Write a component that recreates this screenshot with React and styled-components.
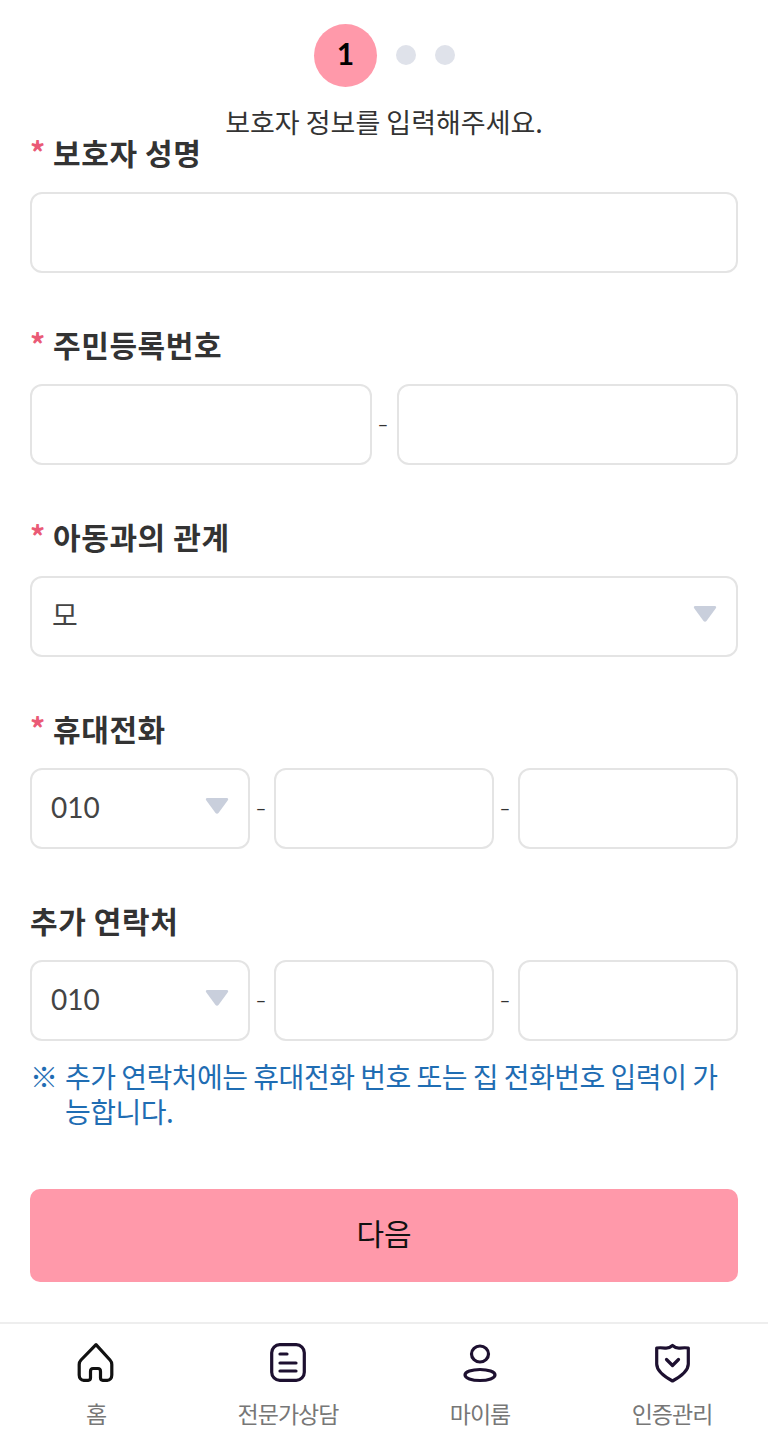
import React from 'react'
import styled, { createGlobalStyle } from 'styled-components'

const fontStack = `"Noto Sans CJK KR", "Noto Sans", sans-serif`

const GlobalStyle = createGlobalStyle`
  html, body {
    margin: 0;
    padding: 0;
    background: #fff;
    font-family: ${fontStack};
  }
  * {
    box-sizing: border-box;
  }
`

const Page = styled.div`
  width: 768px;
  height: 1440px;
  overflow: hidden;
  background: #fff;
`

const Stepper = styled.div`
  display: flex;
  align-items: center;
  justify-content: center;
  padding-top: 24px;
  padding-left: 1px;
  gap: 19px;
`

const ActiveStep = styled.div`
  width: 63px;
  height: 63px;
  padding-bottom: 5px;
  border-radius: 50%;
  background: #ff99aa;
  color: #000;
  display: flex;
  align-items: center;
  justify-content: center;
  font-family: Lato, sans-serif;
  font-size: 30px;
  font-weight: 700;
`

const StepDot = styled.div`
  width: 20px;
  height: 20px;
  margin-bottom: 1px;
  border-radius: 50%;
  background: #dfe2ea;
`

const Caption = styled.p`
  margin: 21px 0 0;
  text-align: center;
  font-size: 27px;
  line-height: 28px;
  color: #333;
`

const Form = styled.form`
  padding: 0 30px;
  display: flex;
  flex-direction: column;
  gap: 55px;
`

const Field = styled.div`
  display: flex;
  flex-direction: column;
  gap: 18px;
`

const Label = styled.label`
  display: flex;
  align-items: center;
  height: 38px;
  padding-bottom: 7px;
  font-size: 30px;
  font-weight: 700;
  letter-spacing: 0.6px;
  color: #333;
`

const Star = styled.span`
  width: 23px;
  margin-bottom: 2px;
  color: #ea5a76;
  font-size: 30px;
  font-weight: 700;
`

const Row = styled.div`
  display: grid;
  grid-template-columns: ${(p) => p.$columns};
  align-items: center;
`

const Input = styled.input`
  min-width: 0;
  width: 100%;
  height: 81px;
  padding: 0 20px;
  background: #fff;
  border: 2px solid #e4e4e4;
  border-radius: 12px;
  font-family: ${fontStack};
  font-size: 28px;
  color: #444;
  outline: none;
`

const Dash = styled.span`
  padding-bottom: 5px;
  padding-right: 2px;
  text-align: center;
  font-family: Lato, sans-serif;
  font-size: 32px;
  font-weight: 300;
  color: #333;
`

const SelectWrap = styled.div`
  position: relative;
  min-width: 0;
  height: 81px;
`

const SelectBox = styled.select`
  appearance: none;
  width: 100%;
  height: 100%;
  padding: 0 50px 4px ${(p) => p.$inset}px;
  background: #fff;
  border: 2px solid #e4e4e4;
  border-radius: 12px;
  font-family: Lato, ${fontStack};
  font-size: 28px;
  color: #444;
  outline: none;
`

const Arrow = styled.svg`
  position: absolute;
  top: 29px;
  right: 21px;
  width: 24px;
  height: 18px;
  pointer-events: none;
`

const Note = styled.div`
  display: flex;
  margin-top: -37px;
  color: #1f6db3;
  font-size: 28px;
  line-height: 35px;
  letter-spacing: -0.5px;
`

const NoteMark = styled.span`
  flex: none;
  width: 35px;
`

const NextButton = styled.button`
  display: block;
  width: 100%;
  height: 93px;
  margin-top: 5px;
  padding-bottom: 8px;
  border: 0;
  border-radius: 10px;
  background: #ff99aa;
  color: #111;
  font-family: ${fontStack};
  font-size: 30px;
`

const BottomNav = styled.nav`
  display: grid;
  grid-template-columns: repeat(4, 1fr);
  margin-top: 40px;
  height: 118px;
  padding-top: 19px;
  border-top: 2px solid #eeeeee;
  background: #fff;
`

const NavItem = styled.div`
  display: flex;
  flex-direction: column;
  align-items: center;
  gap: 9px;
  color: #777;
  font-size: 23px;
  line-height: 34px;
  letter-spacing: -1px;
`

const NavIcon = styled.svg`
  display: block;
  width: 44px;
  height: 44px;
  fill: none;
  stroke: ${(p) => p.$color};
  stroke-width: 3.2;
  stroke-linecap: round;
  stroke-linejoin: round;
`

const CaretIcon = () => (
  <Arrow viewBox="0 0 24 18">
    <path d="M2 1h20c1 0 1.500 1 1 2L13.500 16c-.8 1-2.200 1-3 0L1 3C.5 2 1 1 2 1z" fill="#c9cfdc" />
  </Arrow>
)

const PhoneRow = () => (
  <Row $columns="1fr 24px 1fr 24px 1fr">
    <SelectWrap>
      <SelectBox $inset={19} defaultValue="010">
        <option value="010">010</option>
        <option value="011">011</option>
        <option value="016">016</option>
      </SelectBox>
      <CaretIcon />
    </SelectWrap>
    <Dash>-</Dash>
    <Input type="tel" />
    <Dash>-</Dash>
    <Input type="tel" />
  </Row>
)

const navItems = [
  {
    label: '홈',
    color: '#111',
    icon: (
      <path d="M22 1.700 L7 17c-1.200 1.300-1.800 2.500-1.800 4.500V32c0 3 1.800 5.300 4.500 5.300h4.500c1.500 0 2.300-1 2.300-2.500v-6.300c0-2 1-3 2.500-3h5c1.500 0 2.500 1 2.500 3v6.300c0 1.500.8 2.500 2.300 2.500h4.500c2.700 0 4.500-2.300 4.500-5.300V21.500c0-2-.6-3.200-1.800-4.500z" />
    ),
  },
  {
    label: '전문가상담',
    color: '#1d1030',
    icon: (
      <>
        <rect x="5.700" y="1.700" width="32.600" height="35.600" rx="8" />
        <path d="M14 11h7M14 20h16M14 28h16" />
      </>
    ),
  },
  {
    label: '마이룸',
    color: '#1d1030',
    icon: (
      <>
        <ellipse cx="22" cy="11" rx="8.500" ry="8" />
        <ellipse cx="22" cy="32" rx="15" ry="5.500" />
      </>
    ),
  },
  {
    label: '인증관리',
    color: '#1d1030',
    icon: (
      <>
        <path d="M22.500 2.500c-2.500 2.200-4.500 3-7.500 2.600-2.800-.4-5-.6-8.300-.1V21c0 7 7.500 12.500 15.800 17 8.300-4.500 15.800-10 15.800-17V5c-3.300-.5-5.500-.3-8.300.1-3 .4-5-.4-7.500-2.600z" />
        <path d="M16.500 16.500l6 6 6-6" />
      </>
    ),
  },
]

const App = () => {
  return (
    <Page>
      <GlobalStyle />
      <Stepper>
        <ActiveStep>1</ActiveStep>
        <StepDot />
        <StepDot />
      </Stepper>
      <Caption>보호자 정보를 입력해주세요.</Caption>

      <Form onSubmit={(e) => e.preventDefault()}>
        <Field>
          <Label><Star>*</Star>보호자 성명</Label>
          <Input type="text" />
        </Field>

        <Field>
          <Label><Star>*</Star>주민등록번호</Label>
          <Row $columns="1fr 25px 1fr">
            <Input type="text" />
            <Dash>-</Dash>
            <Input type="password" />
          </Row>
        </Field>

        <Field>
          <Label><Star>*</Star>아동과의 관계</Label>
          <SelectWrap>
            <SelectBox $inset={20} defaultValue="mother">
              <option value="mother">모</option>
              <option value="father">부</option>
            </SelectBox>
            <CaretIcon />
          </SelectWrap>
        </Field>

        <Field>
          <Label><Star>*</Star>휴대전화</Label>
          <PhoneRow />
        </Field>

        <Field>
          <Label>추가 연락처</Label>
          <PhoneRow />
        </Field>

        <Note>
          <NoteMark>※</NoteMark>
          <span>추가 연락처에는 휴대전화 번호 또는 집 전화번호 입력이 가능합니다.</span>
        </Note>

        <NextButton type="submit">다음</NextButton>
      </Form>

      <BottomNav>
        {navItems.map((item) => (
          <NavItem key={item.label}>
            <NavIcon viewBox="0 0 44 44" $color={item.color}>{item.icon}</NavIcon>
            {item.label}
          </NavItem>
        ))}
      </BottomNav>
    </Page>
  )
}

export default App
